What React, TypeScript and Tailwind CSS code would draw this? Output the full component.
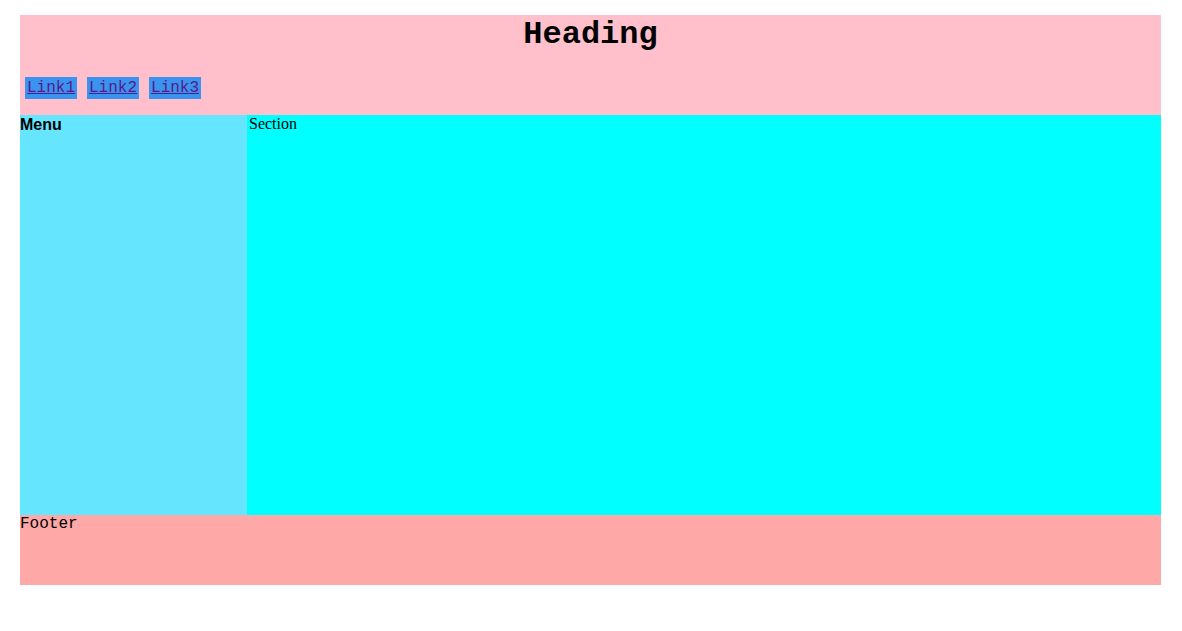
import React from "react";

const links = ["Link1", "Link2", "Link3"];

const mono = "font-['Courier_New','Nimbus_Mono_PS',FreeMono,'Liberation_Mono',monospace]";

export default function App() {
  return (
    <div className="bg-white min-h-[631px] pt-[15px]">
      <div className="ml-[20px] w-[1141px]">
        {/* header */}
        <header className="h-[100px] bg-[#ffc0cb] flex flex-col">
          <h1 className={`pt-[2px] text-center text-[32px] leading-[36px] font-bold text-black ${mono}`}>
            Heading
          </h1>
          <nav className="mt-[24px] ml-[5px] flex gap-[10px]">
            {links.map((l) => (
              <a
                key={l}
                href="#"
                className={`bg-[#3a93ee] px-[2px] py-[2px] text-[16px] leading-[18px] underline text-[#551a8b] ${mono}`}
              >
                {l}
              </a>
            ))}
          </nav>
        </header>

        {/* main */}
        <div className="flex h-[400px]">
          <aside className="w-[227px] bg-[#66e5ff] font-['Liberation_Sans',sans-serif] font-bold text-[16px] leading-[18px] pt-[1px] text-black">
            Menu
          </aside>
          <section className="flex-1 bg-[#00ffff] pl-[2px] font-['Liberation_Serif',serif] text-[16px] leading-[18px] text-black">
            Section
          </section>
        </div>

        <footer className={`h-[70px] bg-[#ffa8a8] text-[16px] leading-[18px] text-black ${mono}`}>
          Footer
        </footer>
      </div>
    </div>
  );
}
